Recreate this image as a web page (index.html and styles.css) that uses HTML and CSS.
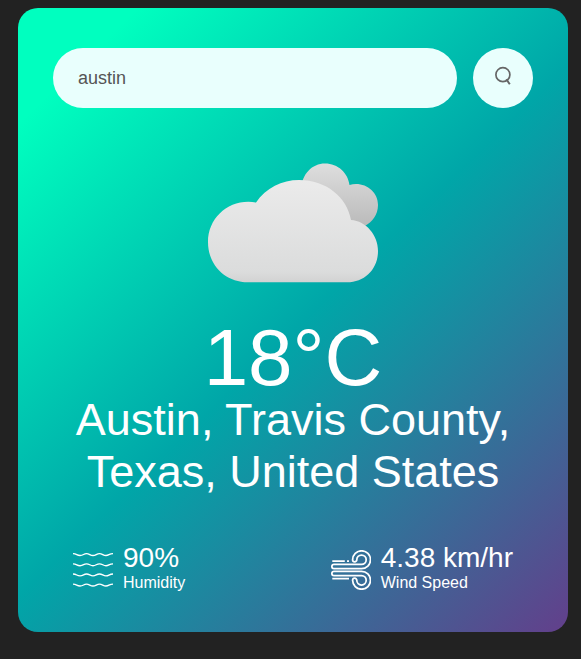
FILE: index.html
```html
<!DOCTYPE html>
<html lang="en">
<head>
<meta charset="utf-8">
<title>Weather</title>
<link rel="stylesheet" href="styles.css">
</head>
<body>
<main class="card">
  <form class="search">
    <input class="search-input" type="text" value="austin" aria-label="City" spellcheck="false">
    <button class="search-button" type="button" aria-label="Search">
      <svg width="18" height="20" viewBox="0 0 18 20" fill="none" stroke="#666" stroke-width="1.7"><circle cx="8.9" cy="8.7" r="7"/><path d="M12.300 13.200L15.800 18.200" stroke-width="2"/></svg>
    </button>
  </form>
  <section class="weather">
    <svg class="weather-icon" viewBox="0 0 170 170">
      <defs>
        <linearGradient id="back" x1="0" y1="0" x2="0" y2="1"><stop offset="0" stop-color="#dedede"/><stop offset="1" stop-color="#b8b8b8"/></linearGradient>
        <linearGradient id="front" x1="0" y1="0" x2="0" y2="1"><stop offset="0" stop-color="#ebebeb"/><stop offset=".9" stop-color="#dbdcdc"/><stop offset="1" stop-color="#d2d2d2"/></linearGradient>
      </defs>
      <path fill="url(#back)" d="M93 51C94 36 104 25.500 117 25.500C130 25.500 140 35 141.500 47C156 43 170 53 170 67C170 77 164 84 157 88L130 92Z"/>
      <path fill="url(#front)" d="M40 144.300C17 144.300 0 127 0 104C0 79 22 60 48 64.500C58 50 74 42 91 42C118 42 139 59 143 82C158 83 170 97 170 113C170 131 157 144.300 139 144.300Z"/>
    </svg>
    <h1 class="temp">18°C</h1>
    <h2 class="city">Austin, Travis County, Texas, United States</h2>
    <div class="details">
      <div class="detail">
        <svg class="detail-icon" viewBox="0 0 40 40" fill="none" stroke="#fff" stroke-width="1.35">
          <path id="wave" d="M0 3.600C4 3.600 3.500 5.500 7 5.500S10.500 3.600 13.500 3.600S17 5.500 20 5.500S23.500 3.600 26.500 3.600S30 5.500 33 5.500S36 3.600 40 3.600"/>
          <use href="#wave" y="10.200"/><use href="#wave" y="20.400"/><use href="#wave" y="30.500"/>
        </svg>
        <div><p class="value">90%</p><p class="label">Humidity</p></div>
      </div>
      <div class="detail">
        <svg class="detail-icon" viewBox="0 0 40 40" fill="none" stroke="#fff" stroke-width="1.75">
          <path d="M1.300 11H13.800M16 11H18M1.300 28.700H18"/>
          <path d="M3 18.700H30.500A8.950 8.950 0 1 0 21.600 9.700A2.100 2.100 0 0 0 25.800 9.700A4.700 4.700 0 1 1 30.500 14.400H3A2.150 2.150 0 0 0 3 18.700Z"/>
          <path d="M3 21.300H30.500A8.950 8.950 0 1 1 21.600 30.300A2.100 2.100 0 0 1 25.800 30.300A4.700 4.700 0 1 0 30.500 25.600H3A2.150 2.150 0 0 1 3 21.300Z"/>
        </svg>
        <div><p class="value">4.38 km/hr</p><p class="label">Wind Speed</p></div>
      </div>
    </div>
  </section>
</main>
</body>
</html>
```
FILE: styles.css
```css
* {
  margin: 0;
  padding: 0;
  box-sizing: border-box;
  font-family: "Liberation Sans", sans-serif;
}
body {
  background: #222;
  padding: 8px 13px 0 18px;
}
.card {
  width: 550px;
  height: 624px;
  padding: 40px 35px;
  border-radius: 20px;
  color: #fff;
  text-align: center;
  background: linear-gradient(136deg, #00ffbf 10%, #00a6a8 51%, #633f8b 100%);
}
.search {
  display: flex;
  justify-content: space-between;
  gap: 16px;
}
.search-input {
  flex: 1;
  min-width: 0;
  height: 60px;
  padding: 10px 25px;
  border: 0;
  outline: 0;
  border-radius: 30px;
  background: #e9fffd;
  color: #555;
  font-size: 18px;
}
.search-button {
  width: 60px;
  height: 60px;
  border: 0;
  border-radius: 50%;
  background: #e9fffd;
}
.search-button svg {
  display: block;
  margin: -4px auto 0 21px;
}
.weather-icon {
  display: block;
  width: 170px;
  height: 170px;
  margin: 30px auto 4px;
}
.temp {
  font-size: 80px;
  font-weight: 500;
  line-height: 92px;
}
.city {
  margin-top: -10px;
  font-size: 45px;
  font-weight: 400;
  line-height: 52px;
}
.details {
  display: flex;
  justify-content: space-between;
  align-items: center;
  margin-top: 50px;
  padding: 0 20px;
}
.detail {
  display: flex;
  align-items: center;
  text-align: left;
}
.detail-icon {
  width: 40px;
  height: 40px;
  margin-right: 10px;
}
.value {
  margin-top: -6px;
  font-size: 28px;
  line-height: 32px;
}
.label {
  font-size: 16px;
  line-height: 18px;
}
```
